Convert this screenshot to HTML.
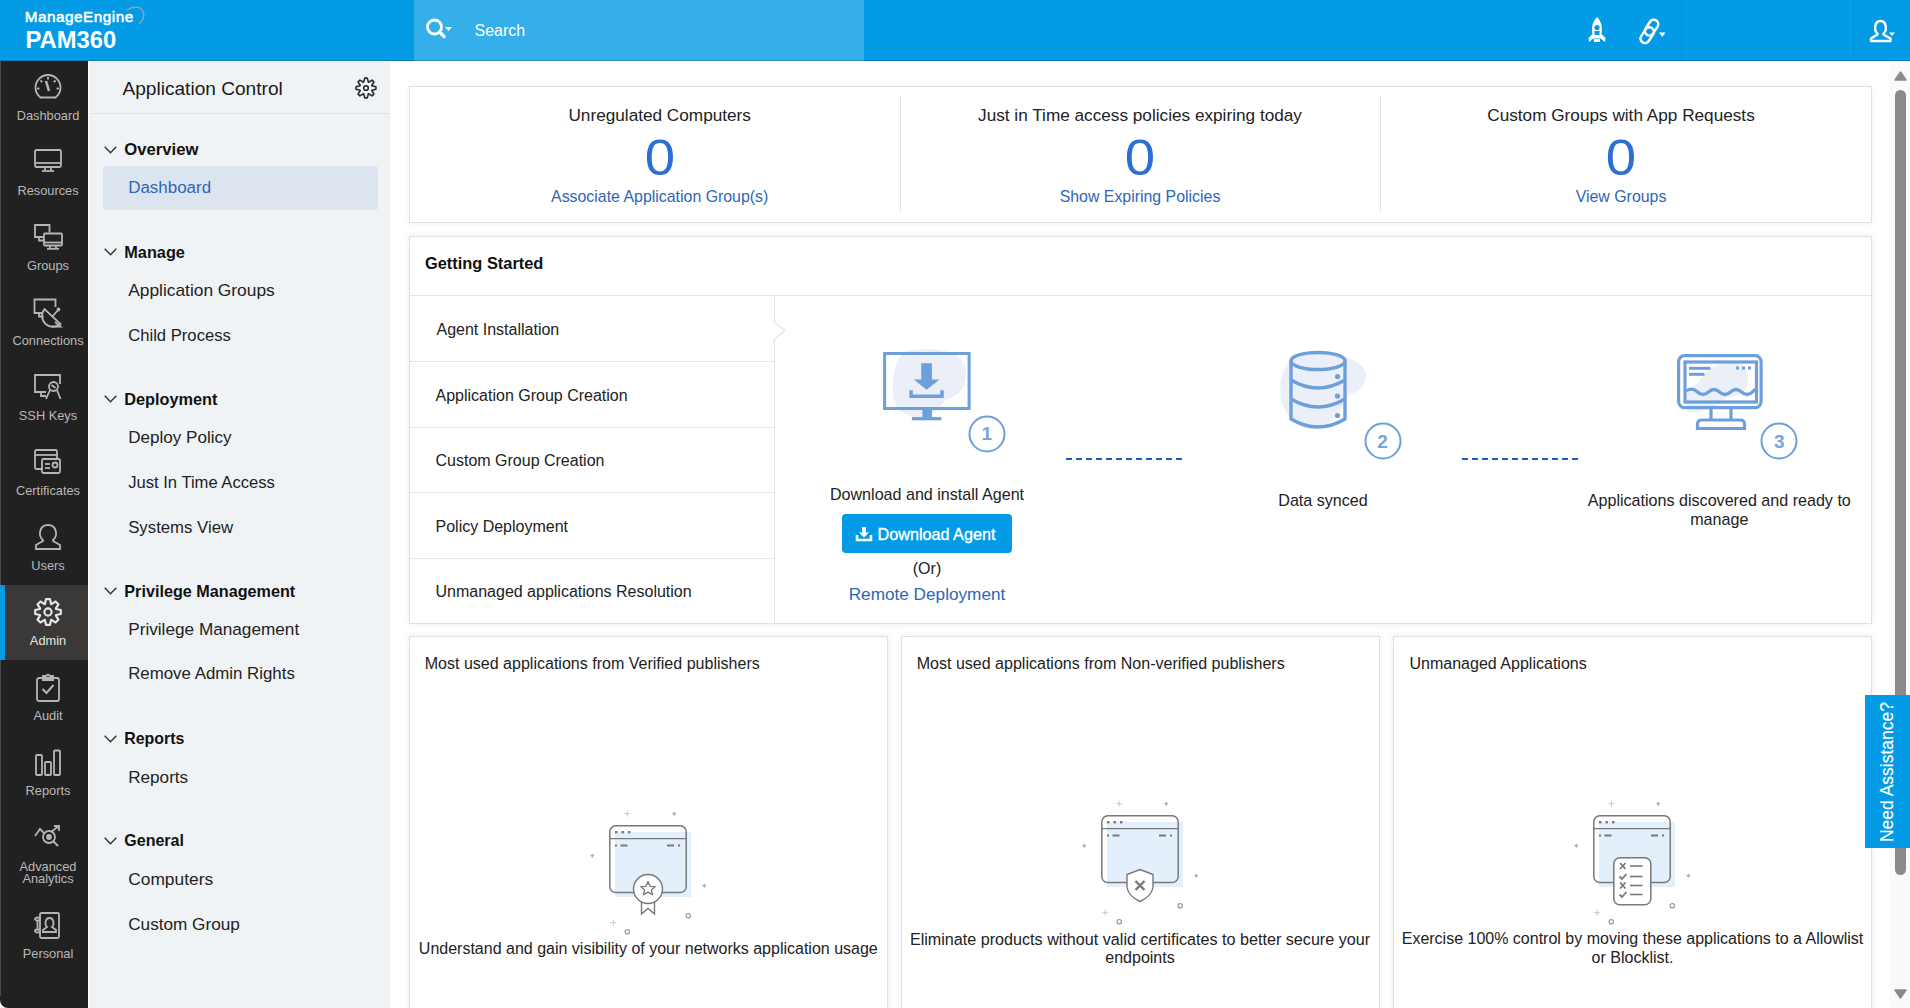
<!DOCTYPE html>
<html><head><meta charset="utf-8">
<style>
*{box-sizing:border-box;margin:0;padding:0}
html,body{width:1910px;height:1008px;overflow:hidden;background:#fff;font-family:"Liberation Sans",sans-serif;color:#222}
.abs{position:absolute;overflow:visible}
.t{position:absolute;white-space:nowrap;line-height:1}
</style></head>
<body>
<div class="abs" style="left:0px;top:0px;width:1910px;height:61px;background:#039be5"></div>
<div class="abs" style="left:414px;top:0px;width:450px;height:61px;background:#35afea"></div>
<div class="abs" style="left:1681px;top:0px;width:1px;height:61px;background:rgba(0,0,0,.06)"></div>
<div class="abs" style="left:1853px;top:0px;width:1px;height:61px;background:rgba(0,0,0,.06)"></div>
<div class="abs" style="left:0px;top:60px;width:1910px;height:1px;background:rgba(20,60,90,.28)"></div>
<div class="t" style="left:24.8px;top:8.6px;font-size:15.3px;font-weight:400;color:#fff;-webkit-text-stroke:0.55px #fff;letter-spacing:0.5px">ManageEngine</div>
<div class="t" style="left:25.5px;top:28.3px;font-size:23.8px;font-weight:700;color:#fff;">PAM360</div>
<svg class="abs" style="left:128px;top:4px;" width="20" height="22" viewBox="0 0 20 22"><path d="M-1.5 6.5 Q6 1.5 12 4 Q17.5 8.5 15 15 Q13.5 18 11 19.5" fill="none" stroke="#9aa4ad" stroke-width="1.4"/></svg>
<svg class="abs" style="left:424px;top:17px;" width="32" height="24" viewBox="0 0 32 24"><circle cx="10.5" cy="10" r="7" fill="none" stroke="#fff" stroke-width="2.8"/><line x1="15.5" y1="15" x2="20" y2="19.5" stroke="#fff" stroke-width="3.2" stroke-linecap="round"/><path d="M21 10 L28 10 L24.5 14 Z" fill="#fff"/></svg>
<div class="t" style="left:474.5px;top:22.6px;font-size:16px;font-weight:400;color:#fff;">Search</div>
<svg class="abs" style="left:1586px;top:16px;" width="22" height="28" viewBox="0 0 22 28"><path d="M11 1 C6 6 5.5 12 6.5 18 L2.5 22 L3 26 L7.5 22.5 L14.5 22.5 L19 26 L19.5 22 L15.5 18 C16.5 12 16 6 11 1 Z" fill="#fff"/><circle cx="11" cy="11.5" r="2.6" fill="#039be5"/><rect x="8.5" y="15" width="5" height="4" fill="#039be5"/><rect x="8" y="23" width="6" height="3" fill="#fff"/></svg>
<svg class="abs" style="left:1638px;top:18px;" width="30" height="28" viewBox="0 0 30 28"><g fill="none" stroke="#fff" stroke-width="2.5"><rect x="-8.5" y="-4.5" width="17" height="9" rx="4.5" transform="translate(13.6,9.6) rotate(-57)"/><rect x="-8.5" y="-4.5" width="17" height="9" rx="4.5" transform="translate(9.2,17.2) rotate(-57)"/></g><path d="M21 14.5 L27.5 14.5 L24.25 19 Z" fill="#fff"/></svg>
<svg class="abs" style="left:1868px;top:18px;" width="30" height="26" viewBox="0 0 30 26"><path d="M9.5 15.5 C6 13 6 3 12.5 3 C19 3 19 13 15.5 15.5 L15.5 16.5 L22.5 20.5 L22.5 23 L3 23 L3 20.5 L9.5 16.5 Z" fill="none" stroke="#fff" stroke-width="2.4" stroke-linejoin="round"/><path d="M21 14.5 L27 14.5 L24 18 Z" fill="#fff"/></svg>
<div class="abs" style="left:0px;top:61px;width:88px;height:947px;background:#222121;border-bottom-left-radius:8px"></div>
<div class="abs" style="left:0px;top:61px;width:1px;height:935px;background:#4a4a4a"></div>
<div class="abs" style="left:0px;top:585px;width:88px;height:75px;background:#3b3937"></div>
<div class="abs" style="left:0px;top:585px;width:5px;height:75px;background:#039be5"></div>
<svg class="abs" style="left:34px;top:74px;overflow:visible" width="28" height="28" viewBox="0 0 28 28"><g fill="none" stroke="#b5b5b5" stroke-width="1.8"><path d="M6.5 23.5 A12.5 12.5 0 1 1 21.5 23.5 Z"/><line x1="12" y1="7" x2="15" y2="17" stroke-width="2.6"/><line x1="14" y1="3" x2="14" y2="5.5"/><line x1="6.5" y1="6.5" x2="8.2" y2="8.2"/><line x1="21.5" y1="6.5" x2="19.8" y2="8.2"/><line x1="3" y1="14.5" x2="5.5" y2="14.5"/><line x1="22.5" y1="14.5" x2="25" y2="14.5"/></g></svg>
<div class="t" style="left:-452.0px;width:1000px;text-align:center;top:110.2px;font-size:12.8px;font-weight:400;color:#b9b9b9;">Dashboard</div>
<svg class="abs" style="left:34px;top:149px;overflow:visible" width="28" height="28" viewBox="0 0 28 28"><g fill="none" stroke="#b5b5b5" stroke-width="1.8"><rect x="1" y="1" width="26" height="17" rx="1.5"/><line x1="1" y1="14" x2="27" y2="14"/><line x1="11" y1="18" x2="11" y2="21"/><line x1="17" y1="18" x2="17" y2="21"/><line x1="8" y1="22" x2="20" y2="22"/></g></svg>
<div class="t" style="left:-452.0px;width:1000px;text-align:center;top:185.2px;font-size:12.8px;font-weight:400;color:#b9b9b9;">Resources</div>
<svg class="abs" style="left:34px;top:224px;overflow:visible" width="28" height="28" viewBox="0 0 28 28"><g fill="none" stroke="#b5b5b5" stroke-width="1.8"><path d="M15.5 8.5 L15.5 1 L1 1 L1 13 L9 13 M5 13 L5 16.5 L9 16.5"/><rect x="10" y="9.5" width="18" height="12" rx="1"/><line x1="10" y1="18.5" x2="28" y2="18.5"/><line x1="16" y1="21.5" x2="16" y2="24.5"/><line x1="22" y1="21.5" x2="22" y2="24.5"/><line x1="13" y1="24.8" x2="25" y2="24.8"/></g></svg>
<div class="t" style="left:-452.0px;width:1000px;text-align:center;top:260.2px;font-size:12.8px;font-weight:400;color:#b9b9b9;">Groups</div>
<svg class="abs" style="left:34px;top:299px;overflow:visible" width="28" height="28" viewBox="0 0 28 28"><g fill="none" stroke="#b5b5b5" stroke-width="1.8"><path d="M21.5 8 L21.5 0.5 L0.5 0.5 L0.5 14 L9 14 M5 14 L5 17.5 L9.5 17.5"/><path d="M10.5 10 A11 11 0 0 0 26.5 25 Z"/><line x1="18.5" y1="17.5" x2="24" y2="11"/><circle cx="24.5" cy="10.5" r="1" fill="#b5b5b5"/><path d="M21 23 L26.5 27.5 L17.5 27.5"/></g></svg>
<div class="t" style="left:-452.0px;width:1000px;text-align:center;top:335.2px;font-size:12.8px;font-weight:400;color:#b9b9b9;">Connections</div>
<svg class="abs" style="left:34px;top:374px;overflow:visible" width="28" height="28" viewBox="0 0 28 28"><g fill="none" stroke="#b5b5b5" stroke-width="1.8"><path d="M26 10 L26 1 L1 1 L1 18 L12 18 M7 18 L7 22 L12 22"/><circle cx="19.5" cy="12.5" r="4.5"/><path d="M16 16 L12 25 M23 16 L26.5 25 M17.5 11 L21.5 14"/></g></svg>
<div class="t" style="left:-452.0px;width:1000px;text-align:center;top:410.2px;font-size:12.8px;font-weight:400;color:#b9b9b9;">SSH Keys</div>
<svg class="abs" style="left:34px;top:449px;overflow:visible" width="28" height="28" viewBox="0 0 28 28"><g fill="none" stroke="#b5b5b5" stroke-width="1.8"><rect x="1" y="1" width="22" height="19" rx="1.5"/><line x1="1" y1="6" x2="23" y2="6"/><rect x="8" y="10" width="18" height="14" rx="1.5" fill="#222121"/><line x1="11" y1="15" x2="16" y2="15"/><line x1="11" y1="19" x2="16" y2="19"/><circle cx="21" cy="16" r="2.5"/></g></svg>
<div class="t" style="left:-452.0px;width:1000px;text-align:center;top:485.2px;font-size:12.8px;font-weight:400;color:#b9b9b9;">Certificates</div>
<svg class="abs" style="left:34px;top:524px;overflow:visible" width="28" height="28" viewBox="0 0 28 28"><g fill="none" stroke="#b5b5b5" stroke-width="1.8"><path d="M9 16 C4 12 5 1 14 1 C23 1 24 12 19 16 L19 17 L26 21 L26 25 L2 25 L2 21 L9 17 Z"/></g></svg>
<div class="t" style="left:-452.0px;width:1000px;text-align:center;top:560.2px;font-size:12.8px;font-weight:400;color:#b9b9b9;">Users</div>
<svg class="abs" style="left:33.6px;top:597.7px;" width="28" height="28" viewBox="0 0 28 28"><g fill="none" stroke="#e8e8e8" stroke-width="2.1" stroke-linejoin="round"><path d="M10.97 5.95 L11.93 1.17 L16.07 1.17 L17.03 5.95 L17.55 6.17 L21.61 3.46 L24.54 6.39 L21.83 10.45 L22.05 10.97 L26.83 11.93 L26.83 16.07 L22.05 17.03 L21.83 17.55 L24.54 21.61 L21.61 24.54 L17.55 21.83 L17.03 22.05 L16.07 26.83 L11.93 26.83 L10.97 22.05 L10.45 21.83 L6.39 24.54 L3.46 21.61 L6.17 17.55 L5.95 17.03 L1.17 16.07 L1.17 11.93 L5.95 10.97 L6.17 10.45 L3.46 6.39 L6.39 3.46 L10.45 6.17 Z"/><circle cx="14" cy="14" r="3.6"/></g></svg>
<div class="t" style="left:-452.0px;width:1000px;text-align:center;top:635.2px;font-size:12.8px;font-weight:400;color:#e6e6e6;">Admin</div>
<svg class="abs" style="left:34px;top:674px;overflow:visible" width="28" height="28" viewBox="0 0 28 28"><g fill="none" stroke="#b5b5b5" stroke-width="1.8"><rect x="3" y="4" width="22" height="23" rx="2"/><path d="M9 4 L9 2 L12 2 L14 0.5 L16 2 L19 2 L19 6 L9 6 Z"/><path d="M8.5 15 L12.5 19 L19.5 11" stroke-width="2"/></g></svg>
<div class="t" style="left:-452.0px;width:1000px;text-align:center;top:710.2px;font-size:12.8px;font-weight:400;color:#b9b9b9;">Audit</div>
<svg class="abs" style="left:34px;top:749px;overflow:visible" width="28" height="28" viewBox="0 0 28 28"><g fill="none" stroke="#b5b5b5" stroke-width="1.8"><rect x="2" y="6" width="6" height="20" rx="1"/><rect x="11" y="13" width="6" height="13" rx="1"/><rect x="20" y="1.5" width="6" height="24.5" rx="1"/></g></svg>
<div class="t" style="left:-452.0px;width:1000px;text-align:center;top:785.2px;font-size:12.8px;font-weight:400;color:#b9b9b9;">Reports</div>
<svg class="abs" style="left:34px;top:824px;overflow:visible" width="28" height="28" viewBox="0 0 28 28"><g fill="none" stroke="#b5b5b5" stroke-width="1.8"><circle cx="15" cy="13" r="6"/><line x1="19.5" y1="17.5" x2="24" y2="22"/><path d="M1 12 L6 5 L10 9 M17 8 L25 2 M20 2 L25 2 L25 7"/><circle cx="15" cy="13" r="2" fill="#b5b5b5"/></g></svg>
<div class="t" style="left:-452.0px;width:1000px;text-align:center;top:860.7px;font-size:12.8px;font-weight:400;color:#b9b9b9;">Advanced</div>
<div class="t" style="left:-452.0px;width:1000px;text-align:center;top:873.4px;font-size:12.8px;font-weight:400;color:#b9b9b9;">Analytics</div>
<svg class="abs" style="left:34px;top:912px;overflow:visible" width="28" height="28" viewBox="0 0 28 28"><g fill="none" stroke="#b5b5b5" stroke-width="1.8"><rect x="6" y="1" width="19" height="25" rx="1.5"/><ellipse cx="3.5" cy="7" rx="2.5" ry="1.5"/><ellipse cx="3.5" cy="19" rx="2.5" ry="1.5"/><line x1="3.5" y1="9" x2="3.5" y2="17"/><path d="M13 15 C10.5 13 11 6 15.5 6 C20 6 20.5 13 18 15 L22 18 L22 20 L9 20 L9 18 Z"/></g></svg>
<div class="t" style="left:-452.0px;width:1000px;text-align:center;top:948.2px;font-size:12.8px;font-weight:400;color:#b9b9b9;">Personal</div>
<div class="abs" style="left:88px;top:61px;width:302px;height:947px;background:#f0f3f6"></div>
<div class="abs" style="left:88px;top:61px;width:2px;height:947px;background:linear-gradient(90deg,#fff,#f0f3f6)"></div>
<div class="abs" style="left:90px;top:113px;width:300px;height:1px;background:#dde1e5"></div>
<div class="t" style="left:122.5px;top:79.3px;font-size:19.1px;font-weight:400;color:#1a1a1a;">Application Control</div>
<svg class="abs" style="left:354.5px;top:77.2px;" width="22" height="22" viewBox="0 0 22 22"><g fill="none" stroke="#2a2a2a" stroke-width="1.6" stroke-linejoin="round"><path d="M8.66 5.15 L9.70 1.08 L12.30 1.08 L13.34 5.15 L13.48 5.21 L17.09 3.07 L18.93 4.91 L16.79 8.52 L16.85 8.66 L20.92 9.70 L20.92 12.30 L16.85 13.34 L16.79 13.48 L18.93 17.09 L17.09 18.93 L13.48 16.79 L13.34 16.85 L12.30 20.92 L9.70 20.92 L8.66 16.85 L8.52 16.79 L4.91 18.93 L3.07 17.09 L5.21 13.48 L5.15 13.34 L1.08 12.30 L1.08 9.70 L5.15 8.66 L5.21 8.52 L3.07 4.91 L4.91 3.07 L8.52 5.21 Z"/><circle cx="11" cy="11" r="2.3"/></g></svg>
<div class="abs" style="left:103px;top:166px;width:275px;height:44px;background:#dce5ef;border-radius:3px"></div>
<svg class="abs" style="left:104px;top:145.8px;" width="13" height="8" viewBox="0 0 13 8"><path d="M0.7 0.7 L6.5 6.8 L12.3 0.7" fill="none" stroke="#333" stroke-width="1.4"/></svg>
<div class="t" style="left:124.3px;top:141.7px;font-size:16.68px;font-weight:700;color:#111;">Overview</div>
<div class="t" style="left:128.2px;top:180.4px;font-size:16.97px;font-weight:400;color:#2d66b8;">Dashboard</div>
<svg class="abs" style="left:104px;top:247.8px;" width="13" height="8" viewBox="0 0 13 8"><path d="M0.7 0.7 L6.5 6.8 L12.3 0.7" fill="none" stroke="#333" stroke-width="1.4"/></svg>
<div class="t" style="left:124.3px;top:244.0px;font-size:16.3px;font-weight:700;color:#111;">Manage</div>
<div class="t" style="left:128.2px;top:282.1px;font-size:17.35px;font-weight:400;color:#222;">Application Groups</div>
<div class="t" style="left:128.2px;top:327.7px;font-size:16.65px;font-weight:400;color:#222;">Child Process</div>
<svg class="abs" style="left:104px;top:394.8px;" width="13" height="8" viewBox="0 0 13 8"><path d="M0.7 0.7 L6.5 6.8 L12.3 0.7" fill="none" stroke="#333" stroke-width="1.4"/></svg>
<div class="t" style="left:124.3px;top:391.0px;font-size:16.3px;font-weight:700;color:#111;">Deployment</div>
<div class="t" style="left:128.2px;top:429.4px;font-size:17.07px;font-weight:400;color:#222;">Deploy Policy</div>
<div class="t" style="left:128.2px;top:474.7px;font-size:16.6px;font-weight:400;color:#222;">Just In Time Access</div>
<div class="t" style="left:128.2px;top:519.6px;font-size:16.77px;font-weight:400;color:#222;">Systems View</div>
<svg class="abs" style="left:104px;top:586.7px;" width="13" height="8" viewBox="0 0 13 8"><path d="M0.7 0.7 L6.5 6.8 L12.3 0.7" fill="none" stroke="#333" stroke-width="1.4"/></svg>
<div class="t" style="left:124.3px;top:583.0px;font-size:16.2px;font-weight:700;color:#111;">Privilege Management</div>
<div class="t" style="left:128.2px;top:621.1px;font-size:17.19px;font-weight:400;color:#222;">Privilege Management</div>
<div class="t" style="left:128.2px;top:666.4px;font-size:16.85px;font-weight:400;color:#222;">Remove Admin Rights</div>
<svg class="abs" style="left:104px;top:734.8px;" width="13" height="8" viewBox="0 0 13 8"><path d="M0.7 0.7 L6.5 6.8 L12.3 0.7" fill="none" stroke="#333" stroke-width="1.4"/></svg>
<div class="t" style="left:124.3px;top:731.3px;font-size:15.9px;font-weight:700;color:#111;">Reports</div>
<div class="t" style="left:128.2px;top:769.3px;font-size:17.14px;font-weight:400;color:#222;">Reports</div>
<svg class="abs" style="left:104px;top:836.7px;" width="13" height="8" viewBox="0 0 13 8"><path d="M0.7 0.7 L6.5 6.8 L12.3 0.7" fill="none" stroke="#333" stroke-width="1.4"/></svg>
<div class="t" style="left:124.3px;top:833.2px;font-size:16.0px;font-weight:700;color:#111;">General</div>
<div class="t" style="left:128.2px;top:871.0px;font-size:17.38px;font-weight:400;color:#222;">Computers</div>
<div class="t" style="left:128.2px;top:916.2px;font-size:17.18px;font-weight:400;color:#222;">Custom Group</div>
<div class="abs" style="left:409px;top:86px;width:1463px;height:137px;background:#fff;border:1px solid #e0e0e0;box-shadow:0 0 7px rgba(0,0,0,.06)"></div>
<div class="abs" style="left:900px;top:97px;width:1px;height:116px;background:#e3e3e3"></div>
<div class="abs" style="left:1380px;top:97px;width:1px;height:116px;background:#e3e3e3"></div>
<div class="t" style="left:159.7px;width:1000px;text-align:center;top:107.0px;font-size:17.2px;font-weight:400;color:#222;">Unregulated Computers</div>
<div class="t" style="left:159.7px;width:1000px;text-align:center;top:132.5px;font-size:50.5px;font-weight:400;color:#2a6ed6;transform:scaleX(1.08)">0</div>
<div class="t" style="left:159.7px;width:1000px;text-align:center;top:188.7px;font-size:15.9px;font-weight:400;color:#2d66b8;">Associate Application Group(s)</div>
<div class="t" style="left:640.0px;width:1000px;text-align:center;top:107.0px;font-size:17.2px;font-weight:400;color:#222;">Just in Time access policies expiring today</div>
<div class="t" style="left:640.0px;width:1000px;text-align:center;top:132.5px;font-size:50.5px;font-weight:400;color:#2a6ed6;transform:scaleX(1.08)">0</div>
<div class="t" style="left:640.0px;width:1000px;text-align:center;top:188.7px;font-size:15.9px;font-weight:400;color:#2d66b8;">Show Expiring Policies</div>
<div class="t" style="left:1121.0px;width:1000px;text-align:center;top:107.0px;font-size:17.2px;font-weight:400;color:#222;">Custom Groups with App Requests</div>
<div class="t" style="left:1121.0px;width:1000px;text-align:center;top:132.5px;font-size:50.5px;font-weight:400;color:#2a6ed6;transform:scaleX(1.08)">0</div>
<div class="t" style="left:1121.0px;width:1000px;text-align:center;top:188.7px;font-size:15.9px;font-weight:400;color:#2d66b8;">View Groups</div>
<div class="abs" style="left:409px;top:236px;width:1463px;height:388px;background:#fff;border:1px solid #e0e0e0;box-shadow:0 0 7px rgba(0,0,0,.07)"></div>
<div class="t" style="left:425.0px;top:255.0px;font-size:16.4px;font-weight:700;color:#111;">Getting Started</div>
<div class="abs" style="left:410px;top:295px;width:1461px;height:1px;background:#e6e6e6"></div>
<div class="abs" style="left:774px;top:296px;width:1px;height:327px;background:#e6e6e6"></div>
<div class="abs" style="left:410px;top:361px;width:364px;height:1px;border-top:1px dotted #cfcfcf"></div>
<div class="abs" style="left:410px;top:426.5px;width:364px;height:1px;background:#e3e5e8"></div>
<div class="abs" style="left:410px;top:492px;width:364px;height:1px;background:#e3e5e8"></div>
<div class="abs" style="left:410px;top:557.5px;width:364px;height:1px;background:#e3e5e8"></div>
<div class="t" style="left:436.5px;top:322.1px;font-size:16px;font-weight:400;color:#222;">Agent Installation</div>
<div class="t" style="left:435.5px;top:387.6px;font-size:16px;font-weight:400;color:#222;">Application Group Creation</div>
<div class="t" style="left:435.5px;top:453.1px;font-size:16px;font-weight:400;color:#222;">Custom Group Creation</div>
<div class="t" style="left:435.5px;top:518.6px;font-size:16px;font-weight:400;color:#222;">Policy Deployment</div>
<div class="t" style="left:435.5px;top:584.1px;font-size:16px;font-weight:400;color:#222;">Unmanaged applications Resolution</div>
<svg class="abs" style="left:773px;top:319px;" width="14" height="24" viewBox="0 0 14 24"><path d="M1 0 L1 2.5 L12 11.5 L1 20.5 L1 23" fill="#fff" stroke="#e3e3e3" stroke-width="1.2"/><rect x="0" y="3" width="1.6" height="17" fill="#fff"/></svg>
<svg class="abs" style="left:883px;top:351.7px;overflow:visible" width="90" height="70" viewBox="0 0 90 70"><path d="M22 -1 Q45 -5 62 -1 Q84 4 83 25 Q82 42 62 48 Q52 66 32 65 Q12 62 10 42 Q8 12 22 -1 Z" fill="#ebf0f8"/><rect x="1.6" y="1.5" width="84.5" height="55" fill="none" stroke="#6d9fdb" stroke-width="3"/><rect x="39.4" y="57.5" width="9.5" height="8" fill="#6d9fdb"/><rect x="28.9" y="65.1" width="29.5" height="3.2" fill="#6d9fdb"/><path d="M38.2 11.2 L48.9 11.2 L48.9 27.6 L56.6 27.6 L43.6 37.7 L30.8 27.6 L38.2 27.6 Z" fill="#6d9fdb"/><path d="M28.1 38.3 L28.1 44.2 L59 44.2 L59 38.3" fill="none" stroke="#6d9fdb" stroke-width="3.5"/></svg>
<svg class="abs" style="left:966.7px;top:413.5px;" width="40" height="40" viewBox="0 0 40 40"><circle cx="20" cy="20" r="17.5" fill="#fff" stroke="#6d9fdb" stroke-width="2"/></svg>
<div class="t" style="left:486.7px;width:1000px;text-align:center;top:424.4px;font-size:19px;font-weight:700;color:#77a5dc;">1</div>
<div class="t" style="left:427.0px;width:1000px;text-align:center;top:485.5px;font-size:16.1px;font-weight:400;color:#222;">Download and install Agent</div>
<div class="abs" style="left:842px;top:514px;width:170px;height:39px;background:#039be5;border-radius:4px"></div>
<svg class="abs" style="left:855px;top:526px;" width="18" height="16" viewBox="0 0 18 16"><path d="M7 1 L11 1 L11 6.5 L14 6.5 L9 11.5 L4 6.5 L7 6.5 Z" fill="#fff"/><path d="M2 9 L2 14 L16 14 L16 9" fill="none" stroke="#fff" stroke-width="2.6"/></svg>
<div class="t" style="left:877.5px;top:526.3px;font-size:16.2px;font-weight:400;color:#fff;letter-spacing:0px;-webkit-text-stroke:0.35px #fff">Download Agent</div>
<div class="t" style="left:427.0px;width:1000px;text-align:center;top:561.3px;font-size:16px;font-weight:400;color:#222;">(Or)</div>
<div class="t" style="left:427.0px;width:1000px;text-align:center;top:586.3px;font-size:17.2px;font-weight:400;color:#2d66b8;">Remote Deployment</div>
<svg class="abs" style="left:1066px;top:457px;" width="120" height="4" viewBox="0 0 120 4"><line x1="0" y1="2" x2="120" y2="2" stroke="#2259c0" stroke-width="2.2" stroke-dasharray="6 4"/></svg>
<svg class="abs" style="left:1462px;top:457px;" width="120" height="4" viewBox="0 0 120 4"><line x1="0" y1="2" x2="120" y2="2" stroke="#2259c0" stroke-width="2.2" stroke-dasharray="6 4"/></svg>
<svg class="abs" style="left:1289px;top:351px;overflow:visible" width="60" height="80" viewBox="0 0 60 80"><path d="M5 6 Q30 0 55 6 Q78 12 77 26 Q75 40 58 44 Q50 72 25 78 Q2 78 -8 50 Q-12 20 5 6 Z" fill="#ebf0f8"/><g fill="none" stroke="#6d9fdb" stroke-width="3.4"><ellipse cx="29" cy="10" rx="27" ry="8.5"/><path d="M2 10 L2 68 Q29 84 56 68 L56 10"/><path d="M2 29 Q29 45 56 29"/><path d="M2 48 Q29 64 56 48"/></g><circle cx="48.5" cy="25.5" r="2.6" fill="#6d9fdb"/><circle cx="48.5" cy="45" r="2.6" fill="#6d9fdb"/><circle cx="48.5" cy="64.5" r="2.6" fill="#6d9fdb"/></svg>
<svg class="abs" style="left:1362.5px;top:420.6px;" width="40" height="40" viewBox="0 0 40 40"><circle cx="20" cy="20" r="17.5" fill="#fff" stroke="#6d9fdb" stroke-width="2"/></svg>
<div class="t" style="left:882.5px;width:1000px;text-align:center;top:431.5px;font-size:19px;font-weight:700;color:#77a5dc;">2</div>
<div class="t" style="left:823.0px;width:1000px;text-align:center;top:491.6px;font-size:16.1px;font-weight:400;color:#222;">Data synced</div>
<svg class="abs" style="left:1676.8px;top:353.5px;" width="88" height="78" viewBox="0 0 88 78"><path d="M20 30 Q40 0 68 12 Q80 40 50 44 Q30 60 12 58 Q2 40 20 30 Z" fill="#ebf0f8"/><g fill="none" stroke="#6d9fdb" stroke-width="3.2"><rect x="1.6" y="1.6" width="82.5" height="52" rx="6"/><rect x="8" y="8" width="71.5" height="40"/><path d="M34 55 L34 66 M54 55 L54 66"/><path d="M20.5 74.5 L20.5 70 Q20.5 66 25 66 L63 66 Q67.5 66 67.5 70 L67.5 74.5 Z"/><path d="M9.5 37 Q15 33 20.5 38 Q26 43 31.5 38 Q37 33 42.5 38 Q48 43 53.5 38 Q59 33 64.5 38 Q70 43 75.5 38 Q78 35 79 36"/></g><g fill="#6d9fdb"><rect x="12" y="12.8" width="21.5" height="3"/><rect x="12" y="18.8" width="15.5" height="3"/><rect x="59" y="12.5" width="3" height="3"/><rect x="65" y="12.5" width="3" height="3"/><rect x="71" y="12.5" width="3" height="3"/></g></svg>
<svg class="abs" style="left:1759.3px;top:420.6px;" width="40" height="40" viewBox="0 0 40 40"><circle cx="20" cy="20" r="17.5" fill="#fff" stroke="#6d9fdb" stroke-width="2"/></svg>
<div class="t" style="left:1279.3px;width:1000px;text-align:center;top:431.5px;font-size:19px;font-weight:700;color:#77a5dc;">3</div>
<div class="t" style="left:1219.3px;width:1000px;text-align:center;top:491.6px;font-size:16.1px;font-weight:400;color:#222;">Applications discovered and ready to</div>
<div class="t" style="left:1219.3px;width:1000px;text-align:center;top:510.6px;font-size:16.1px;font-weight:400;color:#222;">manage</div>
<div class="abs" style="left:409px;top:636px;width:479px;height:420px;background:#fff;border:1px solid #e0e0e0;box-shadow:0 0 7px rgba(0,0,0,.07)"></div>
<div class="abs" style="left:901px;top:636px;width:479px;height:420px;background:#fff;border:1px solid #e0e0e0;box-shadow:0 0 7px rgba(0,0,0,.07)"></div>
<div class="abs" style="left:1393px;top:636px;width:479px;height:420px;background:#fff;border:1px solid #e0e0e0;box-shadow:0 0 7px rgba(0,0,0,.07)"></div>
<div class="t" style="left:424.7px;top:654.9px;font-size:16.05px;font-weight:400;color:#222;">Most used applications from Verified publishers</div>
<div class="t" style="left:916.7px;top:654.9px;font-size:16.05px;font-weight:400;color:#222;">Most used applications from Non-verified publishers</div>
<div class="t" style="left:1409.4px;top:654.9px;font-size:16.05px;font-weight:400;color:#222;">Unmanaged Applications</div>
<div class="t" style="left:148.3px;width:1000px;text-align:center;top:940.8px;font-size:16.0px;font-weight:400;color:#222;">Understand and gain visibility of your networks application usage</div>
<div class="t" style="left:640.0px;width:1000px;text-align:center;top:930.7px;font-size:16.15px;font-weight:400;color:#222;">Eliminate products without valid certificates to better secure your</div>
<div class="t" style="left:640.0px;width:1000px;text-align:center;top:950.0px;font-size:16.0px;font-weight:400;color:#222;">endpoints</div>
<div class="t" style="left:1132.5px;width:1000px;text-align:center;top:930.9px;font-size:16.0px;font-weight:400;color:#222;">Exercise 100% control by moving these applications to a Allowlist</div>
<div class="t" style="left:1132.5px;width:1000px;text-align:center;top:950.0px;font-size:16.0px;font-weight:400;color:#222;">or Blocklist.</div>
<svg class="abs" style="left:609.3px;top:824.7px;" width="84" height="76" viewBox="0 0 84 76"><rect x="6" y="7" width="76" height="65" fill="#e3effb"/><rect x="0.8" y="0.8" width="76.4" height="66.7" rx="6" fill="none" stroke="#787878" stroke-width="1.5"/><line x1="0.8" y1="13.6" x2="77.2" y2="13.6" stroke="#787878" stroke-width="1.3"/><g fill="#787878"><rect x="6" y="6" width="2.4" height="2.4"/><rect x="12.5" y="6" width="2.4" height="2.4"/><rect x="19" y="6" width="2.4" height="2.4"/><rect x="6" y="19.5" width="2" height="2"/><rect x="11.5" y="19.5" width="7" height="2"/><rect x="58" y="19.5" width="7" height="2"/><rect x="69" y="19.5" width="2" height="2"/></g></svg>
<svg class="abs" style="left:560px;top:780px;" width="180" height="170" viewBox="0 0 180 170"><path d="M67.3 30.700000000000003 L67.3 36.7 M64.3 33.7 L70.3 33.7" stroke="#bbb" stroke-width="0.8"/><path d="M114.3 31.200000000000003 L115.1 32.900000000000006 L116.8 33.7 L115.1 34.5 L114.3 36.2 L113.5 34.5 L111.8 33.7 L113.5 32.900000000000006 Z" fill="#aaa"/><path d="M32.3 73.2 L33.099999999999994 74.9 L34.8 75.7 L33.099999999999994 76.5 L32.3 78.2 L31.499999999999996 76.5 L29.799999999999997 75.7 L31.499999999999996 74.9 Z" fill="#aaa"/><path d="M144.3 103.2 L145.10000000000002 104.9 L146.8 105.7 L145.10000000000002 106.5 L144.3 108.2 L143.5 106.5 L141.8 105.7 L143.5 104.9 Z" fill="#aaa"/><circle cx="128.3" cy="135.7" r="2.2" fill="none" stroke="#999" stroke-width="1.2"/><path d="M53.3 139.7 L53.3 145.7 M50.3 142.7 L56.3 142.7" stroke="#bbb" stroke-width="0.8"/><circle cx="67.3" cy="151.7" r="2.2" fill="none" stroke="#999" stroke-width="1.2"/></svg>
<svg class="abs" style="left:630px;top:872px;" width="36" height="46" viewBox="0 0 36 46"><path d="M11.5 28 L11.5 42 L18 36.5 L24.5 42 L24.5 28" fill="#fff" stroke="#787878" stroke-width="1.4"/><circle cx="18" cy="17" r="14.5" fill="#fff" stroke="#787878" stroke-width="1.4"/><path d="M18 9.5 L20.2 14.3 L25.2 14.6 L21.4 17.9 L22.6 22.8 L18 20.1 L13.4 22.8 L14.6 17.9 L10.8 14.6 L15.8 14.3 Z" fill="none" stroke="#787878" stroke-width="1.3" stroke-linejoin="round"/></svg>
<svg class="abs" style="left:1101.2px;top:814.7px;" width="84" height="76" viewBox="0 0 84 76"><rect x="6" y="7" width="76" height="65" fill="#e3effb"/><rect x="0.8" y="0.8" width="76.4" height="66.7" rx="6" fill="none" stroke="#787878" stroke-width="1.5"/><line x1="0.8" y1="13.6" x2="77.2" y2="13.6" stroke="#787878" stroke-width="1.3"/><g fill="#787878"><rect x="6" y="6" width="2.4" height="2.4"/><rect x="12.5" y="6" width="2.4" height="2.4"/><rect x="19" y="6" width="2.4" height="2.4"/><rect x="6" y="19.5" width="2" height="2"/><rect x="11.5" y="19.5" width="7" height="2"/><rect x="58" y="19.5" width="7" height="2"/><rect x="69" y="19.5" width="2" height="2"/></g></svg>
<svg class="abs" style="left:1052px;top:770px;" width="180" height="170" viewBox="0 0 180 170"><path d="M67.2 30.700000000000003 L67.2 36.7 M64.2 33.7 L70.2 33.7" stroke="#bbb" stroke-width="0.8"/><path d="M114.2 31.200000000000003 L115.0 32.900000000000006 L116.7 33.7 L115.0 34.5 L114.2 36.2 L113.4 34.5 L111.7 33.7 L113.4 32.900000000000006 Z" fill="#aaa"/><path d="M32.2 73.2 L33.0 74.9 L34.7 75.7 L33.0 76.5 L32.2 78.2 L31.400000000000002 76.5 L29.700000000000003 75.7 L31.400000000000002 74.9 Z" fill="#aaa"/><path d="M144.2 103.2 L145.0 104.9 L146.7 105.7 L145.0 106.5 L144.2 108.2 L143.39999999999998 106.5 L141.7 105.7 L143.39999999999998 104.9 Z" fill="#aaa"/><circle cx="128.2" cy="135.7" r="2.2" fill="none" stroke="#999" stroke-width="1.2"/><path d="M53.2 139.7 L53.2 145.7 M50.2 142.7 L56.2 142.7" stroke="#bbb" stroke-width="0.8"/><circle cx="67.2" cy="151.7" r="2.2" fill="none" stroke="#999" stroke-width="1.2"/></svg>
<svg class="abs" style="left:1125px;top:868px;" width="30" height="36" viewBox="0 0 30 36"><path d="M15 1.5 L28 6.5 L28 19 Q27 28 15 33.5 Q3 28 2 19 L2 6.5 Z" fill="#fff" stroke="#787878" stroke-width="1.4"/><path d="M10.5 13 L19.5 22 M19.5 13 L10.5 22" stroke="#787878" stroke-width="2.4"/></svg>
<svg class="abs" style="left:1593.3px;top:814.7px;" width="84" height="76" viewBox="0 0 84 76"><rect x="6" y="7" width="76" height="65" fill="#e3effb"/><rect x="0.8" y="0.8" width="76.4" height="66.7" rx="6" fill="none" stroke="#787878" stroke-width="1.5"/><line x1="0.8" y1="13.6" x2="77.2" y2="13.6" stroke="#787878" stroke-width="1.3"/><g fill="#787878"><rect x="6" y="6" width="2.4" height="2.4"/><rect x="12.5" y="6" width="2.4" height="2.4"/><rect x="19" y="6" width="2.4" height="2.4"/><rect x="6" y="19.5" width="2" height="2"/><rect x="11.5" y="19.5" width="7" height="2"/><rect x="58" y="19.5" width="7" height="2"/><rect x="69" y="19.5" width="2" height="2"/></g></svg>
<svg class="abs" style="left:1544px;top:770px;" width="180" height="170" viewBox="0 0 180 170"><path d="M67.3 30.700000000000003 L67.3 36.7 M64.3 33.7 L70.3 33.7" stroke="#bbb" stroke-width="0.8"/><path d="M114.3 31.200000000000003 L115.1 32.900000000000006 L116.8 33.7 L115.1 34.5 L114.3 36.2 L113.5 34.5 L111.8 33.7 L113.5 32.900000000000006 Z" fill="#aaa"/><path d="M32.3 73.2 L33.099999999999994 74.9 L34.8 75.7 L33.099999999999994 76.5 L32.3 78.2 L31.499999999999996 76.5 L29.799999999999997 75.7 L31.499999999999996 74.9 Z" fill="#aaa"/><path d="M144.3 103.2 L145.10000000000002 104.9 L146.8 105.7 L145.10000000000002 106.5 L144.3 108.2 L143.5 106.5 L141.8 105.7 L143.5 104.9 Z" fill="#aaa"/><circle cx="128.3" cy="135.7" r="2.2" fill="none" stroke="#999" stroke-width="1.2"/><path d="M53.3 139.7 L53.3 145.7 M50.3 142.7 L56.3 142.7" stroke="#bbb" stroke-width="0.8"/><circle cx="67.3" cy="151.7" r="2.2" fill="none" stroke="#999" stroke-width="1.2"/></svg>
<svg class="abs" style="left:1613px;top:857px;" width="40" height="50" viewBox="0 0 40 50"><rect x="0.8" y="0.8" width="37" height="47" rx="6" fill="#fff" stroke="#787878" stroke-width="1.5"/><g stroke="#787878" stroke-width="1.8" fill="none"><path d="M7 6 L12.5 12 M12.5 6 L7 12"/><line x1="17" y1="9" x2="29.5" y2="9" stroke-width="1.6"/><path d="M6.5 19.5 L9 22.0 L13.5 17.0"/><line x1="17" y1="19.5" x2="29.5" y2="19.5" stroke-width="1.6"/><path d="M7 25.5 L12.5 31.5 M12.5 25.5 L7 31.5"/><line x1="17" y1="28.5" x2="29.5" y2="28.5" stroke-width="1.6"/><path d="M6.5 37.5 L9 40.0 L13.5 35.0"/><line x1="17" y1="37.5" x2="29.5" y2="37.5" stroke-width="1.6"/></g></svg>
<div class="abs" style="left:1889px;top:61px;width:21px;height:947px;background:#fafafa"></div>
<svg class="abs" style="left:1893px;top:70px;" width="15" height="12" viewBox="0 0 15 12"><path d="M2 10 L7.5 2 L13 10 Z" fill="#8a8a8a" stroke="#8a8a8a" stroke-width="1.5" stroke-linejoin="round"/></svg>
<div class="abs" style="left:1895px;top:90px;width:11px;height:785px;background:#8a8a8a;border-radius:5.5px"></div>
<svg class="abs" style="left:1893px;top:988px;" width="15" height="12" viewBox="0 0 15 12"><path d="M2 2 L7.5 10 L13 2 Z" fill="#8a8a8a" stroke="#8a8a8a" stroke-width="1.5" stroke-linejoin="round"/></svg>
<div class="abs" style="left:1865px;top:695px;width:45px;height:153px;background:#039be5"></div>
<div class="t" style="left:1887.5px;top:771.5px;font-size:17.5px;color:#fff;-webkit-text-stroke:0.15px #fff;transform:translate(-50%,-50%) rotate(-90deg);">Need Assistance?</div>
</body></html>
